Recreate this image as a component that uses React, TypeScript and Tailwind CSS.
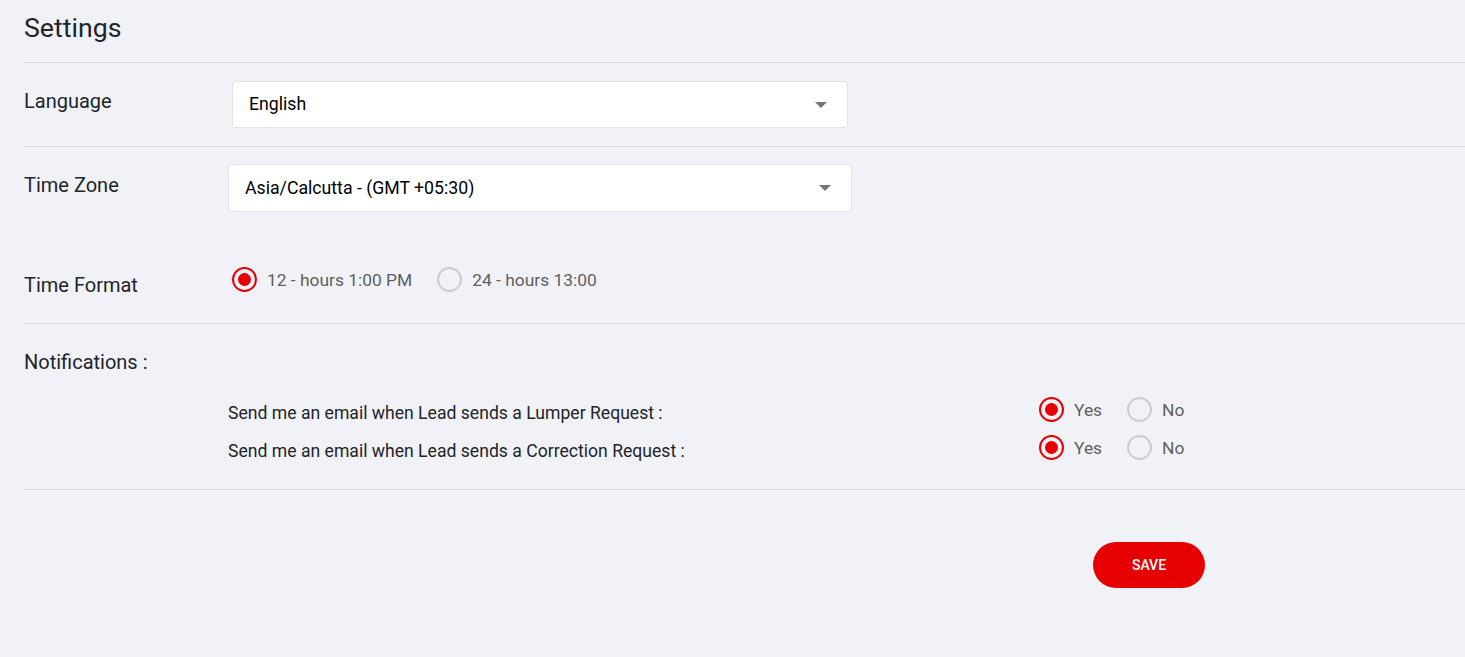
const Caret = () => (
  <svg width="12" height="6" viewBox="0 0 12 6" className="shrink-0">
    <path d="M0 0 L12 0 L6 6 Z" fill="#757575" />
  </svg>
)

const Select = ({ value, width }: { value: string; width: string }) => (
  <div
    className={`${width} h-[47px] bg-white border border-[#e2e3e6] rounded-[3px] flex items-center justify-between pl-4 pr-[20px] text-[17.7px] text-black`}
  >
    <span>{value}</span>
    <Caret />
  </div>
)

const Radio = ({ checked, label }: { checked: boolean; label: string }) => (
  <label className="flex items-center gap-[10px] cursor-pointer">
    <span
      className={`w-[25px] h-[25px] rounded-full border-2 flex items-center justify-center ${
        checked ? 'border-[#e60000]' : 'border-[#cccccc]'
      }`}
    >
      {checked && <span className="w-[13px] h-[13px] rounded-full bg-[#e60000]" />}
    </span>
    <span className="text-[17.4px] leading-6 text-[#5f5f5f]">{label}</span>
  </label>
)

const notifications = [
  'Send me an email when Lead sends a Lumper Request :',
  'Send me an email when Lead sends a Correction Request :',
]

export default function App() {
  return (
    <div className="min-h-screen bg-[#f1f2f7] pl-6 font-['Roboto',sans-serif] text-[#212529]">
      <h1 className="pt-3 pb-[18px] text-[26.7px] leading-8">Settings</h1>

      {/* Language */}
      <div className="border-t border-[#dcdde1] pt-[18px] pb-[18px] flex items-start">
        <div className="w-[208px] text-[20px] leading-6 pt-[8px]">Language</div>
        <Select value="English" width="w-[616px]" />
      </div>

      {/* Time zone + format */}
      <div className="border-t border-[#dcdde1] pt-[17px] pb-[26px]">
        <div className="flex items-start">
          <div className="w-[204px] text-[20px] leading-6 pt-[9px]">Time Zone</div>
          <Select value="Asia/Calcutta - (GMT +05:30)" width="w-[624px] h-[48px]" />
        </div>
        <div className="flex items-start mt-[55px]">
          <div className="w-[208px] text-[20px] leading-6 pt-[6px]">Time Format</div>
          <div className="flex items-center gap-[25px]">
            <Radio checked label="12 - hours 1:00 PM" />
            <Radio checked={false} label="24 - hours 13:00" />
          </div>
        </div>
      </div>

      {/* Notifications */}
      <div className="border-t border-[#dcdde1] pt-[26px] pb-[26px]">
        <div className="text-[20px] leading-6">Notifications :</div>
        <div className="mt-[27px] flex flex-col gap-[14px] pl-[204px]">
          {notifications.map((text) => (
            <div key={text} className="flex items-center h-6">
              <div className="w-[811px] text-[17.6px]">{text}</div>
              <div className="flex items-center gap-[25px] -mt-[7px]">
                <Radio checked label="Yes" />
                <Radio checked={false} label="No" />
              </div>
            </div>
          ))}
        </div>
      </div>

      <div className="border-t border-[#dcdde1] pt-[52px]">
        <button className="ml-[1069px] w-[112px] h-[46px] rounded-full bg-[#e60000] text-white text-sm font-medium">
          SAVE
        </button>
      </div>
    </div>
  )
}
